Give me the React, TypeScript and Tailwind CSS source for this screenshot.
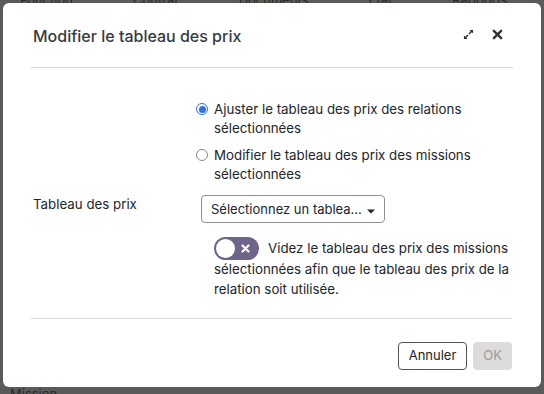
import React, { useState } from "react";

const App: React.FC = () => {
  const [mode, setMode] = useState<"relations" | "missions">("relations");
  const [clear, setClear] = useState(false);

  return (
    <div
      className="relative w-[544px] h-[394px] overflow-hidden bg-[#5a5a5a]"
      style={{ fontFamily: "Inter, 'Noto Sans', sans-serif" }}
    >
      {/* Page behind the backdrop */}
      <div className="flex gap-[60px] px-[20px] -mt-[9px] text-[13px] text-[#2a2a2a]">
        <span>Fonction</span>
        <span>Contrat</span>
        <span>Documents</span>
        <span>Etat</span>
        <span>Rapports</span>
      </div>
      <div className="absolute left-[10px] bottom-[-10px] text-[13px] text-[#2a2a2a]">Mission</div>

      {/* Dialog */}
      <div className="absolute left-[3px] top-[3px] w-[538px] h-[384px] bg-white rounded-[6px] flex flex-col px-[28px] text-[#212529]">
        {/* Header */}
        <div className="flex items-center justify-between h-[65px] pt-[1px] border-b border-[#d8d8d8]">
          <h1 className="text-[16px] font-medium text-[#373a3c] ml-[2px]">Modifier le tableau des prix</h1>
          <div className="flex items-center gap-[18px] mr-[10px] mb-[3px] text-[#333]">
            <svg width="11" height="11" viewBox="0 0 12 12" fill="currentColor">
              <path d="M7 1h4v4L9.6 3.6 7.2 6 6 4.8 8.4 2.4z" />
              <path d="M5 11H1V7l1.4 1.4L4.8 6 6 7.2 3.6 9.6z" />
            </svg>
            <svg width="11" height="11" viewBox="0 0 12 12" fill="none" stroke="currentColor" strokeWidth="2.6" strokeLinecap="round">
              <path d="M2 2l8 8M10 2l-8 8" />
            </svg>
          </div>
        </div>

        {/* Body */}
        <div className="flex-1 pt-[32px] text-[13.3px] leading-[19px]">
          <div className="ml-[165px] flex flex-col gap-[8px]">
            <label className="flex items-start gap-[6px] cursor-pointer" onClick={() => setMode("relations")}>
              <span
                className={`mt-[3px] w-[12px] h-[12px] rounded-full shrink-0 flex items-center justify-center border ${
                  mode === "relations" ? "border-[#2f6fe8] bg-white" : "border-[#8a8a8a] bg-white"
                }`}
              >
                {mode === "relations" && <span className="w-[7px] h-[7px] rounded-full bg-[#2f6fe8]" />}
              </span>
              <span>
                Ajuster le tableau des prix des relations
                <br />
                sélectionnées
              </span>
            </label>
            <label className="flex items-start gap-[6px] cursor-pointer" onClick={() => setMode("missions")}>
              <span
                className={`mt-[3px] w-[12px] h-[12px] rounded-full shrink-0 flex items-center justify-center border ${
                  mode === "missions" ? "border-[#2f6fe8] bg-white" : "border-[#8a8a8a] bg-white"
                }`}
              >
                {mode === "missions" && <span className="w-[7px] h-[7px] rounded-full bg-[#2f6fe8]" />}
              </span>
              <span>
                Modifier le tableau des prix des missions
                <br />
                sélectionnées
              </span>
            </label>
          </div>

          <div className="flex items-center mt-[11px]">
            <span className="w-[168px] ml-[2px] -mt-[10px]">Tableau des prix</span>
            <button className="flex items-center gap-[5px] h-[28px] pl-[9px] pr-[9px] border border-[#8f8f8f] rounded-[4px] text-[13px]">
              Sélectionnez un tablea...
              <svg className="mt-[4px]" width="8" height="5" viewBox="0 0 8 5" fill="currentColor">
                <path d="M0 0.5h8L4 4.5z" />
              </svg>
            </button>
          </div>

          <div className="ml-[183px] mt-[15px] w-[302px] leading-[20.5px]">
            <button
              onClick={() => setClear(!clear)}
              className="float-left mt-[-1px] mb-[-6px] mr-[9px] w-[45px] h-[23px] rounded-full bg-[#6f6589] relative"
            >
              <span className="absolute left-[2px] top-[2px] w-[19px] h-[19px] rounded-full bg-white" />
              <svg className="absolute right-[9px] top-[7px]" width="9" height="9" viewBox="0 0 9 9" fill="none" stroke="white" strokeWidth="2.2" strokeLinecap="round">
                <path d="M1.5 1.5l6 6M7.5 1.5l-6 6" />
              </svg>
            </button>
            <p>
              Videz le tableau des prix des missions sélectionnées afin que le tableau des prix de la relation soit utilisée.
            </p>
          </div>
        </div>

        {/* Footer */}
        <div className="border-t border-[#d8d8d8] h-[69px] flex items-start pt-[23px] justify-end gap-[6px] mr-[1px]">
          <button className="h-[28px] px-[10px] border border-[#555] rounded-[4px] text-[13px] text-[#222]">Annuler</button>
          <button className="h-[28px] px-[10px] rounded-[4px] bg-[#dcdcdc] text-[13px] text-[#9a9a9a]">OK</button>
        </div>
      </div>
    </div>
  );
};

export default App;
